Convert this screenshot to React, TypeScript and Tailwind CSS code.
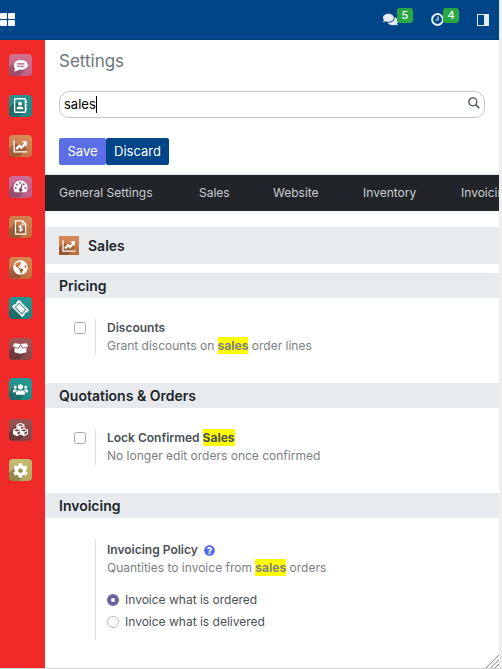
import { useState } from "react";
import type { ReactNode } from "react";
import type { IconType } from "react-icons";
import {
  FaBoxOpen,
  FaCog,
  FaComments,
  FaCubes,
  FaGlobeAmericas,
  FaQuestionCircle,
  FaRegAddressBook,
  FaTicketAlt,
  FaUsers,
} from "react-icons/fa";

function ChatIcon({ className }: { className?: string }) {
  return (
    <svg viewBox="0 0 16 16" className={className} fill="none">
      <path
        d="M8.300 2.200c4.200 0 7.500 2.300 7.500 5.200s-3.300 5.200-7.500 5.200c-.8 0-1.500-.1-2.200-.2-1.300 1-3.200 1.700-5.300 1.700.9-.8 1.500-1.700 1.600-2.800C1.300 10.300.8 8.900.8 7.400c0-2.900 3.300-5.200 7.500-5.200z"
        fill="currentColor"
      />
      <path d="M4.200 6.200h8M4.200 8.800h8" stroke="#a9557a" strokeWidth="1.200" />
    </svg>
  );
}

function TrendIcon({ className }: { className?: string }) {
  return (
    <svg viewBox="0 0 16 16" className={className} fill="none" stroke="currentColor">
      <path d="M1.200 1.500v12.300h14" strokeWidth="1.400" />
      <path d="M3.500 10.800l3.300-3.600 2.300 2.100 3.600-4" strokeWidth="2.400" />
      <path d="M9.300 2.400h5.500v5.500z" fill="currentColor" stroke="none" />
    </svg>
  );
}

function InvoiceIcon({ className }: { className?: string }) {
  return (
    <svg viewBox="0 0 16 16" className={className} fill="none" stroke="currentColor">
      <path d="M2.700 1h7.500l3.300 3.300V15H2.700z" strokeWidth="1.300" />
      <path d="M10 1v3.600h3.500" strokeWidth="1.100" />
      <path
        d="M10 6.900c-.4-.6-1-.8-1.900-.8-2.500 0-2.500 2.400 0 2.500 2.600.1 2.600 2.700 0 2.700-1 0-1.700-.3-2.100-1M8.100 5v7.400"
        strokeWidth="1.200"
      />
    </svg>
  );
}

function GaugeIcon({ className }: { className?: string }) {
  return (
    <svg viewBox="0 0 16 16" className={className}>
      <path d="M8 1.500a7.500 7.500 0 0 0-7.500 7.600c0 1.900.6 3.600 1.600 5h11.800c1-1.400 1.600-3.100 1.600-5A7.500 7.500 0 0 0 8 1.500z" fill="currentColor" />
      <g fill="#8f3f69">
        <circle cx="2.900" cy="9.500" r="1" />
        <circle cx="4.300" cy="5.800" r="1" />
        <circle cx="7.500" cy="4" r="1" />
        <circle cx="11.500" cy="5.600" r="1" />
        <circle cx="13.200" cy="9.500" r="1" />
        <path d="M9.200 4.800l.9.200-.8 5.200a1.900 1.900 0 1 1-1.500-.3z" />
      </g>
    </svg>
  );
}

function TicketIcon({ className }: { className?: string }) {
  return <FaTicketAlt className={`rotate-45 ${className ?? ""}`} />;
}

type App = { name: string; color: string; icon: IconType | typeof ChatIcon };

const apps: App[] = [
  { name: "Discuss", color: "from-[#d3708f] to-[#bd6288]", icon: ChatIcon },
  { name: "Contacts", color: "from-[#27918f] to-[#238583]", icon: FaRegAddressBook },
  { name: "Sales", color: "from-[#d98a5b] to-[#c4743f]", icon: TrendIcon },
  { name: "Dashboards", color: "from-[#cf6b93] to-[#bb5c88]", icon: GaugeIcon },
  { name: "Invoicing", color: "from-[#d08350] to-[#bd6f3e]", icon: InvoiceIcon },
  { name: "Website", color: "from-[#d98652] to-[#bd6d3e]", icon: FaGlobeAmericas },
  { name: "Events", color: "from-[#279692] to-[#218582]", icon: TicketIcon },
  { name: "Inventory", color: "from-[#a55458] to-[#85454a]", icon: FaBoxOpen },
  { name: "Employees", color: "from-[#279995] to-[#218582]", icon: FaUsers },
  { name: "Apps", color: "from-[#9c5053] to-[#824448]", icon: FaCubes },
  { name: "Settings", color: "from-[#c6bb72] to-[#b5a75e]", icon: FaCog },
];

function AppTile({ app }: { app: App }) {
  const Icon = app.icon;
  return (
    <span
      className={`relative grid h-[22px] w-[23px] place-items-center overflow-hidden rounded bg-linear-to-b text-white ${app.color}`}
    >
      <span className="absolute inset-0 bg-black/20 [clip-path:polygon(0_62%,25%_35%,80%_60%,45%_100%,0_100%)]" />
      <Icon className="relative size-[15px]" />
    </span>
  );
}

function Mark({ children }: { children: ReactNode }) {
  return <mark className="bg-[#ffff00] py-px font-bold text-inherit">{children}</mark>;
}

function Badge({ children }: { children: ReactNode }) {
  return (
    <span className="-ml-px mb-2 grid h-[15px] w-4 place-items-center rounded-[3px] bg-[#28a745] text-[11px] leading-none font-medium text-white">
      {children}
    </span>
  );
}

function SectionTitle({ children }: { children: ReactNode }) {
  return (
    <h2 className="flex h-[25px] items-center bg-[#e7ebee] px-3.5 text-[14px] font-semibold text-[#212529]">
      {children}
    </h2>
  );
}

function Setting({
  id,
  title,
  help,
  children,
}: {
  id: string;
  title: ReactNode;
  help: ReactNode;
  children?: ReactNode;
}) {
  return (
    <div className="flex pl-7">
      <div className="w-[22px] shrink-0 pt-[3px]">
        {!children && (
          <input
            id={id}
            type="checkbox"
            className="ml-px block size-3 appearance-none rounded-[3px] border border-[#aaadb0] bg-white checked:bg-[#71639e]"
          />
        )}
      </div>
      <div className="min-w-0 flex-1 border-l border-[#dcdee6] pl-[11px] text-[12px] leading-[18px]">
        {children ? (
          <h3 className="flex items-center pt-0.5 font-semibold text-[#495057]">{title}</h3>
        ) : (
          <label htmlFor={id} className="block font-semibold text-[#495057]">
            {title}
          </label>
        )}
        <p className="text-[#7c8085]">{help}</p>
        {children}
      </div>
    </div>
  );
}

const tabs = [
  { name: "General Settings", width: "w-[97px]" },
  { name: "Sales", width: "w-[31px]" },
  { name: "Website", width: "w-[47px]" },
  { name: "Inventory", width: "w-[55px]" },
  { name: "Invoicing", width: "w-[54px]" },
];

const policies = [
  { value: "order", label: "Invoice what is ordered" },
  { value: "delivery", label: "Invoice what is delivered" },
];

export default function App() {
  const [query, setQuery] = useState("sales");
  const [policy, setPolicy] = useState("order");

  return (
    <div className="min-h-screen bg-[#eeeeee] pr-[3px] pb-0.5 font-['Inter','Noto_Sans',sans-serif]">
      <div className="relative flex flex-col overflow-hidden border-b border-[#d5d5d5] bg-white">
        <header className="flex h-10 items-center justify-between border-b border-[#003b75] bg-[#004588] pr-2.5 text-[#e5ecf3]">
          <button aria-label="Applications" className="text-white">
            <svg viewBox="0 0 15 14" className="h-3.5 w-[15px]" fill="currentColor">
              <rect x="0" y="0" width="7" height="6" rx="1" />
              <rect x="8" y="0" width="7" height="6" rx="1" />
              <rect x="0" y="7" width="7" height="6" rx="1" />
              <rect x="8" y="7" width="7" height="6" rx="1" />
            </svg>
          </button>
          <div className="flex items-center">
            <button aria-label="Messages" className="flex items-center">
              <FaComments className="size-[15px]" />
              <Badge>5</Badge>
            </button>
            <button aria-label="Activities" className="ml-[18px] flex items-center">
              <svg viewBox="0 0 13 13" className="size-[13px]" fill="none" stroke="currentColor">
                <circle cx="6.500" cy="6.500" r="5.400" strokeWidth="2" />
                <path d="M7 3.500v3.500H4.500" strokeWidth="1.200" />
              </svg>
              <Badge>4</Badge>
            </button>
            <button aria-label="Toggle side panel" className="ml-[18px]">
              <svg viewBox="0 0 12 12" className="size-3">
                <rect x=".5" y=".5" width="11" height="11" fill="none" stroke="currentColor" />
                <rect x="7" y="0" width="5" height="12" fill="currentColor" />
              </svg>
            </button>
          </div>
        </header>

        <div className="flex flex-1">
          <nav aria-label="Apps" className="w-[45px] shrink-0 bg-[#f02929] pt-3.5 pl-[9px]">
            <ul className="flex h-[427px] flex-col justify-between">
              {apps.map((app) => (
                <li key={app.name}>
                  <button aria-label={app.name} className="block">
                    <AppTile app={app} />
                  </button>
                </li>
              ))}
            </ul>
          </nav>

          <main className="min-w-0 flex-1">
            <div className="px-3.5 py-[9px]">
              <h1 className="text-[17px] leading-6 text-[#6c757d]">Settings</h1>
              <div className="mt-[18px] flex h-[27px] items-center rounded-[10px] border border-[#c3c5c8] pr-1 pl-1">
                <label className="flex min-w-0 flex-1 items-center">
                  <input
                    aria-label="Search settings"
                    value={query}
                    onChange={(e) => setQuery(e.target.value)}
                    className="field-sizing-content max-w-full bg-transparent text-[13px] text-black caret-transparent outline-none"
                  />
                  <span className="h-[17px] w-px shrink-0 bg-black" />
                </label>
                <button aria-label="Search" className="mb-1 text-[#495057]">
                  <svg viewBox="0 0 12 12" className="size-3" fill="none" stroke="currentColor">
                    <circle cx="4.800" cy="4.800" r="4" strokeWidth="1.300" />
                    <path d="M7.800 7.800l3.500 3.500" strokeWidth="1.600" />
                  </svg>
                </button>
              </div>
              <div className="mt-5 flex text-[13px] text-white">
                <button className="h-[27px] w-[47px] rounded-[2px] bg-[#5a6ee5]">Save</button>
                <button className="h-[27px] w-[63px] rounded-[2px] bg-[#004588]">Discard</button>
              </div>
            </div>

            <nav
              aria-label="Settings sections"
              className="flex h-[37px] items-center gap-[43px] overflow-hidden border-t border-[#dee2e6] bg-[#212529] px-3.5 text-[12px] text-[#c9ccd0]"
            >
              {tabs.map((tab) => (
                <a key={tab.name} href="#" className={`shrink-0 whitespace-nowrap ${tab.width}`}>
                  {tab.name}
                </a>
              ))}
            </nav>

            <div className="mt-4 flex h-[37px] items-center gap-[9px] bg-[#e7ebee] px-3.5 text-[14px] font-semibold text-[#212529]">
              <span className="relative grid h-[19px] w-5 place-items-center bg-linear-to-b from-[#d98a5b] to-[#b96c3c] text-white">
                <span className="absolute inset-0 bg-black/20 [clip-path:polygon(0_62%,25%_35%,80%_60%,45%_100%,0_100%)]" />
                <TrendIcon className="relative size-3.5" />
              </span>
              Sales
            </div>

            <section className="mt-[9px]">
              <SectionTitle>Pricing</SectionTitle>
              <div className="pt-[21px] pb-7">
                <Setting
                  id="discounts"
                  title="Discounts"
                  help={
                    <>
                      Grant discounts on <Mark>sales</Mark> order lines
                    </>
                  }
                />
              </div>
            </section>

            <section>
              <SectionTitle>Quotations &amp; Orders</SectionTitle>
              <div className="pt-[21px] pb-7">
                <Setting
                  id="lock"
                  title={
                    <>
                      Lock Confirmed <Mark>Sales</Mark>
                    </>
                  }
                  help="No longer edit orders once confirmed"
                />
              </div>
            </section>

            <section>
              <SectionTitle>Invoicing</SectionTitle>
              <div className="pt-[21px] pb-7">
                <Setting
                  id="policy"
                  title={
                    <>
                      Invoicing Policy
                      <FaQuestionCircle className="ml-1.5 size-[11px] text-[#506bee]" />
                    </>
                  }
                  help={
                    <>
                      Quantities to invoice from <Mark>sales</Mark> orders
                    </>
                  }
                >
                  <div className="flex flex-col gap-1 pt-3.5 pb-[9px]">
                    {policies.map((p) => (
                      <label key={p.value} className="flex items-center gap-1.5 text-[#495057]">
                        <input
                          type="radio"
                          name="policy"
                          checked={policy === p.value}
                          onChange={() => setPolicy(p.value)}
                          className="size-3 shrink-0 appearance-none rounded-full border border-[#b5b8bc] bg-white checked:border-[4px] checked:border-[#71639e]"
                        />
                        {p.label}
                      </label>
                    ))}
                  </div>
                </Setting>
              </div>
            </section>
          </main>
        </div>

        <svg viewBox="0 0 13 13" className="absolute right-0 bottom-0 size-[13px]" stroke="#858585">
          <path d="M0 13L13 0M4.500 13L13 4.500M9 13l4-4" />
        </svg>
      </div>
    </div>
  );
}
